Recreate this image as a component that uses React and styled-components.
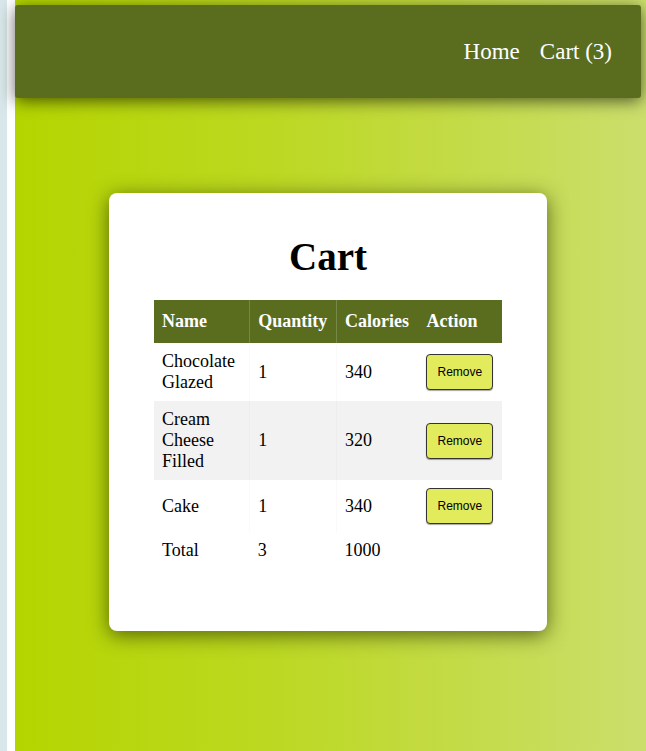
import React from "react";
import styled, { createGlobalStyle } from "styled-components";

const GlobalStyle = createGlobalStyle`
  html, body {
    margin: 0;
    padding: 0;
    background: #ffffff;
    font-family: "Liberation Serif", "Times New Roman", serif;
  }
`;

const Page = styled.div`
  display: flex;
  min-height: 751px;
`;

const SideStrip = styled.div`
  width: 7px;
  flex: none;
  background: #d8e7e9;
  margin-right: 8px;
`;

const Main = styled.main`
  flex: 1;
  min-height: 751px;
  padding: 5px 5px 0 0;
  background: linear-gradient(to right, #b5d500 0%, #bcd821 40%, #cbde6c 100%);
  display: flex;
  flex-direction: column;
`;

const Header = styled.header`
  height: 93px;
  background: #5a6d1f;
  border-radius: 3px;
  box-shadow: 0 3px 16px rgba(0, 0, 0, 0.6);
  display: flex;
  align-items: center;
  justify-content: flex-end;
  padding: 0 29px 0 0;
  gap: 20px;
  position: relative;
  z-index: 1;
`;

const NavLink = styled.a`
  color: #ffffff;
  font-size: 23px;
  text-decoration: none;
  margin-top: 1px;
`;

const Card = styled.section`
  width: 348px;
  margin: 95px auto 0;
  background: #ffffff;
  border-radius: 8px;
  padding: 40px 45px 62px;
  box-shadow: 0 4px 20px rgba(40, 50, 0, 0.7);
`;

const Title = styled.h1`
  margin: 0 0 19px;
  text-align: center;
  font-size: 39px;
  line-height: 48px;
  font-weight: bold;
  color: #000;
`;

const Table = styled.table`
  width: 100%;
  border-collapse: collapse;
  font-size: 18px;
  color: #000;
`;

const Th = styled.th`
  background: #5a6d1f;
  color: #ffffff;
  text-align: left;
  font-weight: bold;
  padding: 11px 8px;
  line-height: 21px;
  width: ${(p) => p.$w}px;
  border-right: ${(p) => (p.$sep ? "1px solid rgba(255,255,255,0.18)" : "none")};
  box-sizing: border-box;
`;

const Row = styled.tr`
  background: ${(p) => (p.$alt ? "#f2f2f2" : "transparent")};
`;

const Td = styled.td`
  padding: 8px;
  line-height: 21px;
  vertical-align: middle;
  border-right: ${(p) => (p.$sep ? "1px solid rgba(0,0,0,0.02)" : "none")};
`;

const RemoveButton = styled.button`
  font-family: "Liberation Sans", Arial, sans-serif;
  font-size: 12px;
  line-height: 14px;
  padding: 10px;
  background: #e1eb5c;
  color: #000;
  border: 1px solid #333;
  border-radius: 4px;
  box-shadow: 0 1px 1px rgba(0, 0, 0, 0.35);
  cursor: pointer;
`;

const items = [
  { name: ["Chocolate", "Glazed"], qty: 1, cal: 340 },
  { name: ["Cream", "Cheese", "Filled"], qty: 1, cal: 320 },
  { name: ["Cake"], qty: 1, cal: 340 },
];

export default function App() {
  return (
    <>
      <GlobalStyle />
      <Page>
        <SideStrip />
        <Main>
          <Header>
            <NavLink href="#">Home</NavLink>
            <NavLink href="#">Cart (3)</NavLink>
          </Header>
          <Card>
            <Title>Cart</Title>
            <Table>
              <thead>
                <tr>
                  <Th $w={96} $sep>Name</Th>
                  <Th $w={87} $sep>Quantity</Th>
                  <Th $w={82}>Calories</Th>
                  <Th $w={83}>Action</Th>
                </tr>
              </thead>
              <tbody>
                {items.map((item, i) => (
                  <Row key={i} $alt={i % 2 === 1}>
                    <Td $sep>
                      {item.name.map((w, j) => (
                        <React.Fragment key={j}>
                          {j > 0 && <br />}
                          {w}
                        </React.Fragment>
                      ))}
                    </Td>
                    <Td $sep>{item.qty}</Td>
                    <Td>{item.cal}</Td>
                    <Td>
                      <RemoveButton>Remove</RemoveButton>
                    </Td>
                  </Row>
                ))}
                <Row>
                  <Td>Total</Td>
                  <Td>3</Td>
                  <Td>1000</Td>
                  <Td />
                </Row>
              </tbody>
            </Table>
          </Card>
        </Main>
      </Page>
    </>
  );
}
